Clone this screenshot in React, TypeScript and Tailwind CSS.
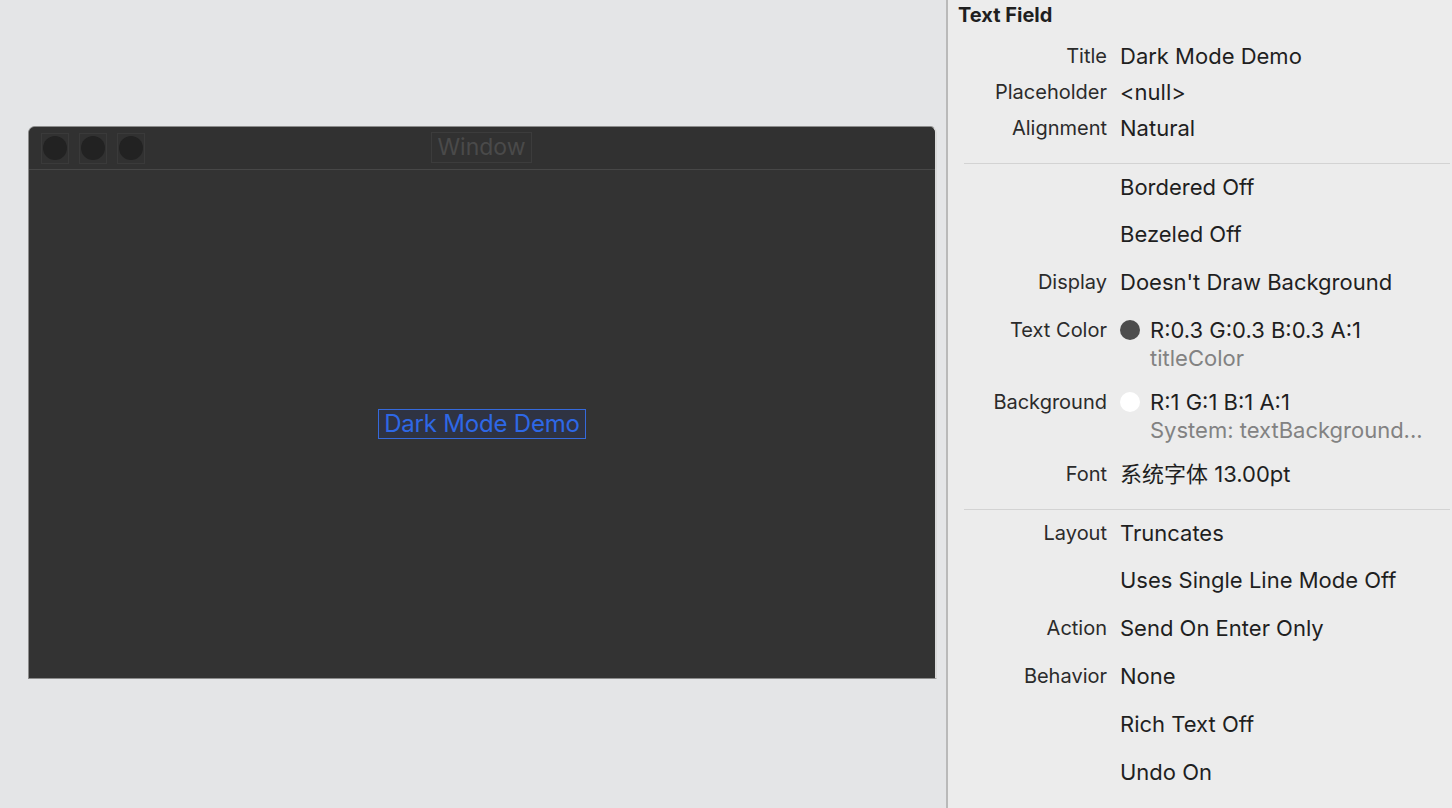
const sans = "font-['Inter','Noto_Sans_CJK_SC',sans-serif]";

type Row = { label?: string; value: string; h: string };

const Line = () => <div className="ml-[16px] mr-[2px] h-px bg-[#d3d3d3]" />;

const PropRow = ({ label, value, h }: Row) => (
  <div className={`flex items-center ${h}`}>
    <div className="w-[159px] shrink-0 text-right text-[20px] text-[#2b2b2b]">{label}</div>
    <div className="ml-[13px] text-[#1f1f1f]">{value}</div>
  </div>
);

const ColorRow = ({
  label,
  value,
  sub,
  swatch,
  className,
}: {
  label: string;
  value: string;
  sub: string;
  swatch: string;
  className: string;
}) => (
  <div className={`flex ${className}`}>
    <div className="w-[159px] shrink-0 text-right text-[20px] leading-[28px] text-[#2b2b2b]">{label}</div>
    <div className="ml-[13px] flex">
      <div className="flex h-[28px] w-[30px] items-center">
        <span className={`h-[20px] w-[20px] rounded-full ${swatch}`} />
      </div>
      <div className="leading-[28px]">
        <div className="text-[#1f1f1f]">{value}</div>
        <div className="text-[#828282]">{sub}</div>
      </div>
    </div>
  </div>
);

const TrafficLight = () => (
  <div className="flex h-[31px] w-[28px] items-center justify-center border border-[#3a3a3a]">
    <span className="h-[24px] w-[24px] rounded-full bg-[#222222]" />
  </div>
);

const App = () => {
  return (
    <div className={`flex h-[808px] w-[1452px] overflow-hidden ${sans}`}>
      {/* canvas with the window */}
      <div className="w-[946px] shrink-0 bg-[#e4e5e7] pl-[28px] pt-[126px]">
        <div className="flex h-[553px] w-[909px] flex-col overflow-hidden rounded-t-[7px] border-t border-l border-b border-r-2 border-[#8c8c8c] border-r-[#d9d9d9] bg-[#333333]">
          <div className="relative flex h-[43px] shrink-0 items-center gap-[10px] border-b border-[#474747] bg-[#313131] pl-[12px]">
            <TrafficLight />
            <TrafficLight />
            <TrafficLight />
            <div className="absolute left-[402px] top-[5px] flex h-[31px] w-[101px] items-center justify-center border border-[#3c3c3c] text-[23px] text-[#4a4a4a]">
              Window
            </div>
          </div>
          <div className="flex flex-1 items-center justify-center">
            <div className="flex h-[30px] w-[208px] items-center justify-center border-[1.5px] border-[#3569db] bg-[#2f3342] text-[24px] tracking-[-0.2px] text-[#2e68e6]">
              Dark Mode Demo
            </div>
          </div>
        </div>
      </div>

      <div className="w-[2px] shrink-0 bg-[#b9b9b9]" />

      {/* inspector */}
      <div className="flex-1 bg-[#ececec] text-[22px]">
        <div className="flex h-[30px] items-center pl-[10px] text-[20px] font-bold text-[#1f1f1f]">Text Field</div>
        <div className="mt-[8px]">
          <PropRow label="Title" value="Dark Mode Demo" h="h-[36px]" />
          <PropRow label="Placeholder" value="<null>" h="h-[36px]" />
          <PropRow label="Alignment" value="Natural" h="h-[36px]" />
        </div>
        <div className="mt-[17px]">
          <Line />
        </div>
        <PropRow value="Bordered Off" h="h-[46px]" />
        <PropRow value="Bezeled Off" h="h-[48px]" />
        <PropRow label="Display" value="Doesn't Draw Background" h="h-[48px]" />
        <ColorRow
          label="Text Color"
          value="R:0.3 G:0.3 B:0.3 A:1"
          sub="titleColor"
          swatch="bg-[#4d4d4d]"
          className="pt-[10px] pb-[16px]"
        />
        <ColorRow
          label="Background"
          value="R:1 G:1 B:1 A:1"
          sub="System: textBackground..."
          swatch="bg-white"
          className="pb-[6px]"
        />
        <PropRow label="Font" value="系统字体 13.00pt" h="h-[48px]" />
        <div className="mt-[11px]">
          <Line />
        </div>
        <PropRow label="Layout" value="Truncates" h="h-[46px]" />
        <PropRow value="Uses Single Line Mode Off" h="h-[48px]" />
        <PropRow label="Action" value="Send On Enter Only" h="h-[48px]" />
        <PropRow label="Behavior" value="None" h="h-[48px]" />
        <PropRow value="Rich Text Off" h="h-[48px]" />
        <PropRow value="Undo On" h="h-[48px]" />
      </div>
    </div>
  );
};

export default App;
